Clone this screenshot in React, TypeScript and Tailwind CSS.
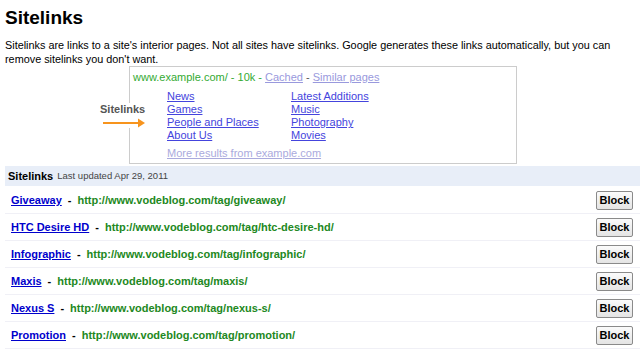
const ROWS = [
  { name: "Giveaway", slug: "giveaway" },
  { name: "HTC Desire HD", slug: "htc-desire-hd" },
  { name: "Infographic", slug: "infographic" },
  { name: "Maxis", slug: "maxis" },
  { name: "Nexus S", slug: "nexus-s" },
  { name: "Promotion", slug: "promotion" },
];

const COL_A = ["News", "Games", "People and Places", "About Us"];
const COL_B = ["Latest Additions", "Music", "Photography", "Movies"];

const App = () => {
  return (
    <div className="min-h-[353px] bg-white pl-[5px] font-['Liberation_Sans',Arial,sans-serif] text-black">
      <h1 className="pt-[6px] text-[19px] font-bold leading-[24px]">Sitelinks</h1>
      <p className="mt-[8px] text-[10.85px] leading-[14px]">
        Sitelinks are links to a site's interior pages. Not all sites have sitelinks. Google generates these links
        automatically, but you can remove sitelinks you don't want.
      </p>

      {/* Example result */}
      <div className="relative ml-[124px] h-[98px] w-[388px] border border-[#cccccc] px-[3px] pt-[4px] text-[11px] leading-[13px]">
        <div className="text-[#33aa33]">
          www.example.com/ - 10k - <span className="text-[#9999dd] underline">Cached</span>
          <span className="text-[#555]"> - </span>
          <span className="text-[#9999dd] underline">Similar pages </span>
        </div>
        <div className="mt-[6px] ml-[34px] flex">
          <ul className="w-[124px]">
            {COL_A.map((l) => (
              <li key={l} className="text-[#4444dd] underline">{l}</li>
            ))}
          </ul>
          <ul>
            {COL_B.map((l) => (
              <li key={l} className="text-[#4444dd] underline">{l}</li>
            ))}
          </ul>
        </div>
        <div className="mt-[5px] ml-[34px] text-[#aaaadd] underline">More results from example.com</div>

        {/* callout */}
        <div className="absolute left-[-30px] top-[36px] bg-white">
          <div className="text-[11px] font-bold leading-[13px] text-[#555]">Sitelinks</div>
          <svg width="44" height="10" viewBox="0 0 44 10" className="ml-[3px] mt-[2px] block">
            <line x1="0" y1="5" x2="36" y2="5" stroke="#f7941d" strokeWidth="2" />
            <path d="M35 0.5 L42 5 L35 9.5 Z" fill="#f7941d" />
          </svg>
        </div>
      </div>

      {/* Sitelinks table */}
      <div className="mt-[2px]">
        <div className="flex h-[20px] items-center bg-[#e8eef8] pl-[3px]">
          <span className="text-[11px] font-bold">Sitelinks</span>
          <span className="ml-[4px] text-[9.5px] text-[#444]">Last updated Apr 29, 2011</span>
        </div>
        <div className="h-[1px]" />
        {ROWS.map((r) => (
          <div
            key={r.slug}
            className="flex h-[27px] items-center justify-between border-b border-[#f0f0f6] pl-[6px] pr-[7px] text-[11px] font-bold"
          >
            <div>
              <a className="text-[#0000cc] underline">{r.name}</a>
              <span className="mx-[6px]">-</span>
              <span className="text-[#228822]">http://www.vodeblog.com/tag/{r.slug}/</span>
            </div>
            <button className="h-[19px] w-[37px] rounded-[2px] border border-[#8a8a8a] bg-gradient-to-b from-[#fbfbfb] to-[#e4e4e4] text-[11px] font-bold leading-none text-black">
              Block
            </button>
          </div>
        ))}
      </div>
    </div>
  );
};

export default App;
